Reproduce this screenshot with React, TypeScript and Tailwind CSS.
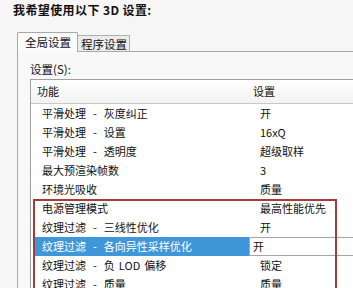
import React from 'react';

interface Row {
  name:  string;
  value: string;
}

const ROWS: Row[] = [
  { name: '平滑处理 - 灰度纠正',         value: '开' },
  { name: '平滑处理 - 设置',             value: '16xQ' },
  { name: '平滑处理 - 透明度',           value: '超级取样' },
  { name: '最大预渲染帧数',              value: '3' },
  { name: '环境光吸收',                  value: '质量' },
  { name: '电源管理模式',                value: '最高性能优先' },
  { name: '纹理过滤 - 三线性优化',       value: '开' },
  { name: '纹理过滤 - 各向异性采样优化', value: '开' },
  { name: '纹理过滤 - 负 LOD 偏移',      value: '锁定' },
  { name: '纹理过滤 - 质量',             value: '质量' },
];

const SELECTED = 7;

// SimSun 风格的宽间距 " - "
function Name({ text }: { text: string }) {
  const parts = text.split(' - ');
  if (parts.length === 1) return <>{text}</>;
  const rest = parts[1].split(' ');
  return (
    <>
      {parts[0]}
      <span className="px-[7px]">-</span>
      {rest.map((w, i) => (
        <span key={i} className={i > 0 ? 'pl-[4px]' : ''}>{w}</span>
      ))}
    </>
  );
}

export default function App() {
  return (
    <div
      className="w-[353px] h-[288px] overflow-hidden bg-[#f6f6f6] text-[#111]"
      style={{ fontFamily: '"Noto Sans CJK SC", "Liberation Sans", sans-serif' }}
    >
      {/* 标题 */}
      <div className="h-[32px] pl-[13px] pt-[2px] text-[12px] font-bold leading-[16px] tracking-[0.4px]">
        我希望使用以下 3D 设置:
      </div>

      {/* 选项卡 */}
      <div className="flex items-end pl-[17px] h-[19px]">
        <div className="w-[61px] h-[20px] -mb-px z-10 bg-[#fbfbfb] border border-b-0 border-[#a8a8a8] rounded-t-[2px] pl-[7px] text-[11.5px] leading-[19px]">
          全局设置
        </div>
        <div className="w-[52px] h-[16px] bg-[#ececec] border border-l-0 border-b-0 border-[#b0b0b0] pl-[3px] text-[11.5px] leading-[16px]">
          程序设置
        </div>
      </div>

      {/* 面板 */}
      <div className="ml-[17px] border-t border-l border-[#a8a8a8] bg-[#f8f8f8] pt-[10px] pl-[12px] h-[240px]">
        <div className="text-[11.5px] leading-[15px]">设置(S):</div>

        {/* 列表 */}
        <div className="relative mt-[2px] bg-white border border-r-0 border-[#a0a0a0] text-[11px] h-[220px]">
          <div className="flex h-[24px] items-center border-b border-[#c8c8c8] bg-gradient-to-b from-white to-[#f2f2f2]">
            <div className="w-[218px] pl-[6px]">功能</div>
            <div className="pl-[4px]">设置</div>
          </div>

          {ROWS.map((r, i) =>
            i === SELECTED ? (
              <div key={r.name} className="flex h-[19px] items-stretch">
                <div className="ml-[4px] w-[214px] pl-[7px] bg-[#3f97d9] text-white leading-[19px] whitespace-nowrap overflow-hidden">
                  <Name text={r.name} />
                </div>
                <div className="flex-1 pl-[3px] bg-white border-y border-l border-[#a5a5a5] leading-[17px]">
                  {r.value}
                </div>
              </div>
            ) : (
              <div key={r.name} className="flex h-[19px] items-center">
                <div className="ml-[4px] w-[214px] pl-[7px] whitespace-nowrap">
                  <Name text={r.name} />
                </div>
                <div className="pl-[11px] whitespace-nowrap">{r.value}</div>
              </div>
            )
          )}

          {/* 红框标注 */}
          <div className="absolute left-[2px] top-[119px] w-[304px] h-[120px] border-2 border-[#a93a3a] pointer-events-none" />
        </div>
      </div>
    </div>
  );
}
